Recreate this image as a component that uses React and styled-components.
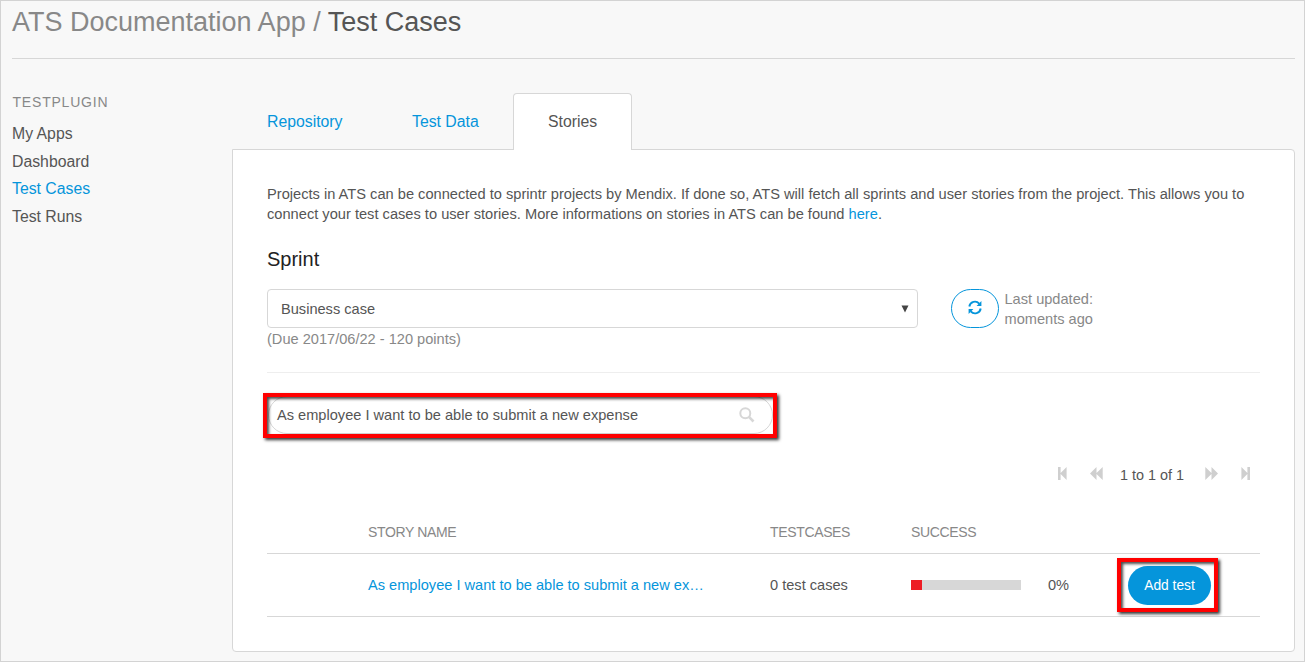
import React from 'react';
import styled, { createGlobalStyle } from 'styled-components';

const Global = createGlobalStyle`
  * { box-sizing: border-box; }
  body { margin: 0; font-family: "Liberation Sans", Arial, sans-serif; font-size: 14.6px; line-height: 20px; color: #555; background: #f8f8f8; }
`;
const Page = styled.div`
  width: 1305px; height: 662px; border: 1px solid #d3d3d3; background: #f8f8f8;
  padding: 0 9px 0 11px; overflow: hidden;
`;
const Header = styled.header`
  height: 58px; border-bottom: 1px solid #d7d7d7;
`;
const Title = styled.h1`
  margin: 0; padding-top: 1px; font-size: 27px; line-height: 40px; font-weight: 400; color: #555; white-space: nowrap;
`;
const AppName = styled.span`color: #888;`;
const Body = styled.div`display: flex;`;
const Sidebar = styled.nav`width: 220px; padding-top: 33px;`;
const SideHeading = styled.div`
  font-size: 14px; letter-spacing: 0.8px; line-height: 20px; color: #888; margin-bottom: 8px; padding-left: 0.5px;
`;
const SideLink = styled.a`
  display: block; font-size: 15.8px; line-height: 27.6px; color: ${p => (p.$active ? '#0595db' : '#555')};
`;
const Main = styled.main`flex: 1; padding-top: 34px;`;
const Tabs = styled.div`display: flex; height: 57px; position: relative; z-index: 1;`;
const Tab = styled.a`
  height: 57px; padding: 0 34px; line-height: 55px; font-size: 15.8px; margin-right: 1px;
  border: 1px solid ${p => (p.$active ? '#d7d7d7' : 'transparent')}; border-bottom: 0;
  border-radius: 4px 4px 0 0; background: ${p => (p.$active ? '#fff' : 'transparent')};
  color: ${p => (p.$active ? '#555' : '#0595db')}; width: ${p => p.$w}px; white-space: nowrap;
`;
const Panel = styled.section`
  margin-top: -1px; height: 503px; background: #fff; border: 1px solid #d7d7d7;
  border-radius: 0 4px 4px 4px; padding: 34px 34px 0;
`;
const Intro = styled.p`margin: 0; font-size: 14.65px; white-space: nowrap;`;
const Link = styled.a`color: #0595db;`;
const Heading = styled.h2`
  margin: 22px 0 17px; font-size: 20px; line-height: 26px; font-weight: 400; color: #222;
`;
const SprintRow = styled.div`display: flex; height: 39px;`;
const Select = styled.div`
  width: 651px; height: 39px; border: 1px solid #d7d7d7; border-radius: 4px;
  display: flex; align-items: center; justify-content: space-between; padding: 0 8px 0 13px;
`;
const RefreshButton = styled.button`
  width: 48px; height: 39px; margin-left: 33px; padding: 0 0 3px; border: 1px solid #0595db; border-radius: 20px;
  background: #fff; display: flex; align-items: center; justify-content: center;
`;
const Updated = styled.div`margin-left: 5.5px; color: #888; width: 100px;`;
const Due = styled.div`margin-top: 1px; color: #888;`;
const Divider = styled.div`height: 1px; background: #eee; margin: 23px 0 20px;`;
const Highlight = styled.div`
  position: relative; width: ${p => p.$w}px; height: ${p => p.$h}px;
  &::after {
    content: ""; position: absolute; inset: 0; border: 4px solid #f00; pointer-events: none;
    box-shadow: 2px 2px 3px rgba(0,0,0,.8), inset 2px 2px 3px rgba(0,0,0,.7);
  }
`;
const SearchMark = styled(Highlight)`margin-left: -4px; padding: 3px 4px 0 5px;`;
const SearchBox = styled.div`
  height: 38px; border: 1px solid #d7d7d7; border-radius: 20px; display: flex; align-items: center;
  justify-content: space-between; padding: 0 17px 1px 8px;
`;
const Pager = styled.div`
  display: flex; align-items: center; height: 20px; margin-top: 27px; padding-left: 791px; white-space: nowrap;
`;
const Count = styled.span`width: 64px; margin: 0 21px 0 17px; font-size: 14.4px;`;
const Columns = styled.div`
  display: grid; grid-template-columns: 101px 402px 141px 137px 69px 1fr; align-items: center; white-space: nowrap;
`;
const HeadRow = styled(Columns)`
  height: 42px; margin-top: 27px; border-bottom: 1px solid #d7d7d7; font-size: 14px; letter-spacing: -0.35px; color: #888; padding-bottom: 1px;
`;
const Row = styled(Columns)`height: 63px; border-bottom: 1px solid #d7d7d7;`;
const Bar = styled.div`width: 110px; height: 10px; background: #d7d7d7;`;
const Fill = styled.div`width: 11px; height: 10px; background: #ed1c24;`;
const ActionMark = styled(Highlight)`padding: 8px 0 0 11px;`;
const AddButton = styled.button`
  display: block; width: 83px; height: 39px; padding: 0; border: 0; border-radius: 20px; background: #0595db;
  color: #fff; font: 13.8px "Liberation Sans", Arial, sans-serif;
`;

const RefreshIcon = () => (
  <svg width="14" height="15" viewBox="0 0 14 15" fill="none" stroke="#0595db" strokeWidth="1.9">
    <path d="M1.3 6.5A5.7 5.7 0 0 1 11.2 3.6M12.7 8.5A5.7 5.7 0 0 1 2.8 11.4" />
    <path d="M13.4 1V6H8.6ZM.6 14V9H5.4Z" fill="#0595db" stroke="none" />
  </svg>
);
const SearchIcon = () => (
  <svg width="16" height="16" viewBox="0 0 16 16" fill="none" stroke="#d7d7d7">
    <circle cx="6.3" cy="6.3" r="5" strokeWidth="2" />
    <path d="M10.2 10.2L14.5 14.5" strokeWidth="2.6" />
  </svg>
);
const StepIcon = ({ flip }) => (
  <svg width="9" height="13" viewBox="0 0 9 13" fill="#cfcfcf" transform={flip ? 'scale(-1 1)' : undefined}>
    <path d="M0 0H2.6V6L8.6 0V13L2.6 7V13H0Z" />
  </svg>
);
const SkipIcon = ({ flip }) => (
  <svg width="13" height="13" viewBox="0 0 13 13" fill="#cfcfcf" transform={flip ? 'scale(-1 1)' : undefined}>
    <path d="M0 6.5L6.5 0V6L12.7 0V13L6.5 7V13Z" />
  </svg>
);
const First = styled.span`display: flex; width: 9px; margin: 0 23px 3px 0;`;
const Skip = styled.span`display: flex; width: 13px; margin-bottom: 3px;`;
const Last = styled.span`display: flex; width: 9px; margin: 0 0 3px 23px;`;
const Caret = () => (
  <svg width="8" height="8" viewBox="0 0 8 8"><path d="M.5 .5H7.5L4 7.5Z" fill="#444" /></svg>
);

export default function App() {
  return (
    <Page>
      <Global />
      <Header><Title><AppName>ATS Documentation App /</AppName> Test Cases</Title></Header>
      <Body>
        <Sidebar>
          <SideHeading>TESTPLUGIN</SideHeading>
          <SideLink>My Apps</SideLink>
          <SideLink>Dashboard</SideLink>
          <SideLink $active>Test Cases</SideLink>
          <SideLink>Test Runs</SideLink>
        </Sidebar>
        <Main>
          <Tabs>
            <Tab $w={144}>Repository</Tab>
            <Tab $w={135}>Test Data</Tab>
            <Tab $w={119} $active>Stories</Tab>
          </Tabs>
          <Panel>
            <Intro>
              Projects in ATS can be connected to sprintr projects by Mendix. If done so, ATS will fetch all sprints and user stories from the project. This allows you to<br />
              connect your test cases to user stories. More informations on stories in ATS can be found <Link>here</Link>.
            </Intro>
            <Heading>Sprint</Heading>
            <SprintRow>
              <Select>Business case<Caret /></Select>
              <RefreshButton><RefreshIcon /></RefreshButton>
              <Updated>Last updated: moments ago</Updated>
            </SprintRow>
            <Due>(Due 2017/06/22 - 120 points)</Due>
            <Divider />
            <SearchMark $w={514} $h={45}>
              <SearchBox>As employee I want to be able to submit a new expense<SearchIcon /></SearchBox>
            </SearchMark>
            <Pager>
              <First><StepIcon /></First>
              <Skip><SkipIcon /></Skip>
              <Count>1 to 1 of 1</Count>
              <Skip><SkipIcon flip /></Skip>
              <Last><StepIcon flip /></Last>
            </Pager>
            <HeadRow><span /><span>STORY NAME</span><span>TESTCASES</span><span>SUCCESS</span></HeadRow>
            <Row>
              <span />
              <Link>As employee I want to be able to submit a new ex…</Link>
              <span>0 test cases</span>
              <Bar><Fill /></Bar>
              <span>0%</span>
              <ActionMark $w={101} $h={54}><AddButton>Add test</AddButton></ActionMark>
            </Row>
          </Panel>
        </Main>
      </Body>
    </Page>
  );
}
